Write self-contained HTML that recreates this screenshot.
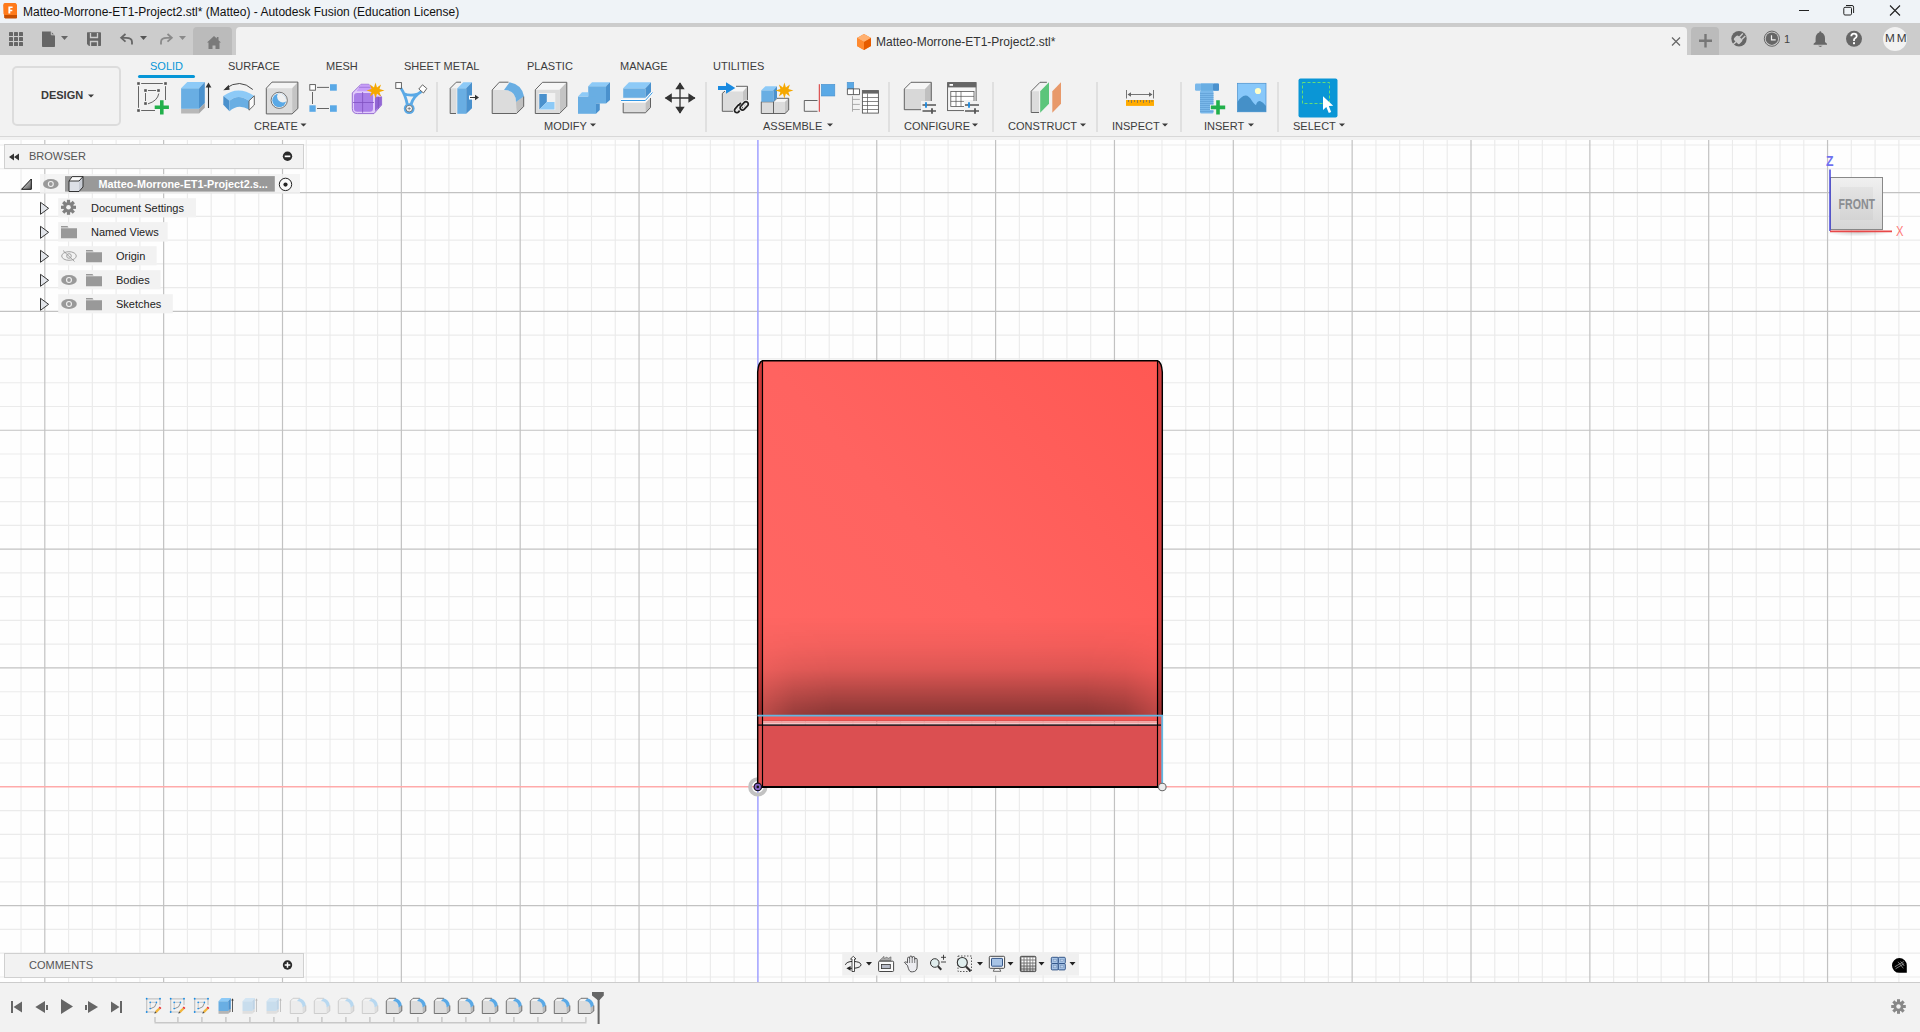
<!DOCTYPE html>
<html><head><meta charset="utf-8">
<style>
*{margin:0;padding:0;box-sizing:border-box}
html,body{width:1920px;height:1032px;overflow:hidden;background:#f2f2f2;font-family:"Liberation Sans",sans-serif;position:relative}
.a{position:absolute}
.t{position:absolute;white-space:nowrap;line-height:1}
svg{position:absolute;overflow:visible}
</style></head><body>
<!-- title bar -->
<div class="a" style="left:0;top:0;width:1920px;height:23px;background:#eff3f7"></div>
<div class="t" style="left:23px;top:6px;font-size:12px;color:#111">Matteo-Morrone-ET1-Project2.stl* (Matteo) - Autodesk Fusion (Education License)</div>
<svg width="1920" height="23" style="left:0;top:0">
<path d="M1799 10.5H1809" stroke="#222" stroke-width="1"/>
<rect x="1843.8" y="7.3" width="7.7" height="7.7" rx="1.2" fill="none" stroke="#222" stroke-width="1"/>
<path d="M1846 5.5H1852Q1853.6 5.5 1853.6 7.1V13" stroke="#222" stroke-width="1" fill="none"/>
<path d="M1890 5.5L1900 15.5M1900 5.5L1890 15.5" stroke="#222" stroke-width="1.1"/>
</svg>
<!-- tab strip -->
<div class="a" style="left:0;top:23px;width:1920px;height:32px;background:#cccccc"></div>
<div class="a" style="left:193px;top:27px;width:39px;height:28px;background:#bbbbbb;border-radius:4px 4px 0 0"></div>
<div class="a" style="left:236px;top:27px;width:1451px;height:28px;background:#f2f2f2;border-radius:4px 4px 0 0"></div>
<div class="t" style="left:876px;top:36px;font-size:12px;color:#333">Matteo-Morrone-ET1-Project2.stl*</div>
<div class="a" style="left:1691px;top:27px;width:28px;height:28px;background:#bbbbbb;border-radius:4px 4px 0 0"></div>
<div class="a" style="left:1883px;top:27px;width:24px;height:24px;background:#f2f2f2;border-radius:50%"></div>
<div class="t" style="left:1885px;top:33px;font-size:11.8px;color:#3a3a3a;letter-spacing:2px">MM</div>
<div class="t" style="left:1784px;top:34px;font-size:11px;color:#444">1</div>
<!-- tabstrip icons -->
<svg width="1920" height="60" style="left:0;top:0">
<!-- app icon -->
<path d="M4.5 4H15L17 6V17.5L16.5 18.5H5.2L4.2 17.5L3.5 5z" fill="#c84f00"/>
<path d="M3.5 4.2Q3.5 3 5 3H15.5L17 4.5V15H4.5L3.5 14z" fill="#ff7a1a"/>
<path d="M8.4 6.5H12.6V8.1H10.3V9.7H12.3V11.2H10.3V13.5H8.4z" fill="#fff"/>
<!-- grid -->
<g fill="#666"><rect x="9" y="32" width="4" height="4" rx="0.6"/><rect x="14" y="32" width="4" height="4" rx="0.6"/><rect x="19" y="32" width="4" height="4" rx="0.6"/>
<rect x="9" y="37" width="4" height="4" rx="0.6"/><rect x="14" y="37" width="4" height="4" rx="0.6"/><rect x="19" y="37" width="4" height="4" rx="0.6"/>
<rect x="9" y="42" width="4" height="4" rx="0.6"/><rect x="14" y="42" width="4" height="4" rx="0.6"/><rect x="19" y="42" width="4" height="4" rx="0.6"/></g>
<!-- file -->
<path d="M42 31.5H51L55 35.5V46.2Q55 47 54.2 47H42.8Q42 47 42 46.2z" fill="#666"/>
<path d="M51.3 31.3V34.8H55" stroke="#cccccc" stroke-width="1" fill="none"/>
<path d="M61 36h7l-3.5 4z" fill="#666"/>
<!-- save -->
<path d="M87.5 32.3H100.2Q101 32.3 101 33V45.3Q101 46 100.3 46H89L87 44V33Q87 32.3 87.5 32.3z" fill="#666"/>
<path d="M90.5 33V37.5H97.5V33M90.5 46V41.5H97.5V46" stroke="#cccccc" stroke-width="1.3" fill="none"/>
<!-- undo -->
<path d="M132 44.5V42Q132 37.8 126 37.8H122" stroke="#666" stroke-width="1.8" fill="none"/>
<path d="M125.5 34L121.2 37.8L125.5 41.6" stroke="#666" stroke-width="1.8" fill="none"/>
<path d="M140 36h7l-3.5 4z" fill="#555"/>
<!-- redo -->
<path d="M161 44.5V42Q161 37.8 167 37.8H171" stroke="#8a8a8a" stroke-width="1.8" fill="none"/>
<path d="M167.5 34L171.8 37.8L167.5 41.6" stroke="#8a8a8a" stroke-width="1.8" fill="none"/>
<path d="M179 36h7l-3.5 4z" fill="#8a8a8a"/>
<!-- home -->
<path d="M214 36L207 42.5H208.5V49H212.5V45.5H215.5V49H219.5V42.5H221L218.5 40.2V37H216.8V38.6z" fill="#7a7a7a"/>
<!-- tab cube -->
<path d="M864 34L871 38V46L864 50L857 46V38z" fill="#f47a20"/>
<path d="M864 34L871 38L864 42L857 38z" fill="#ffb070"/>
<path d="M864 42L871 38V46L864 50z" fill="#e65c00"/>
<path d="M857 38L864 42V50L857 46z" fill="#ff8a30"/>
<!-- close x -->
<path d="M1672 37.5L1680 45.5M1680 37.5L1672 45.5" stroke="#666" stroke-width="1.2"/>
<!-- plus -->
<path d="M1705.5 34V47.5M1699 40.7H1712" stroke="#777" stroke-width="2.4"/>
<!-- plug -->
<circle cx="1739" cy="38.7" r="7.7" fill="#666"/>
<g transform="translate(1739 38.7) rotate(45)" fill="#cccccc">
<rect x="-3.9" y="-1.6" width="8" height="6" rx="1.6"/>
<rect x="-1.6" y="-6.3" width="1.4" height="5"/><rect x="1.9" y="-6.3" width="1.4" height="5"/>
<rect x="-0.7" y="3.5" width="1.4" height="6.5"/>
</g>
<!-- clock -->
<circle cx="1771.9" cy="38.7" r="7.6" stroke="#666" stroke-width="1" fill="none"/>
<circle cx="1771.9" cy="38.7" r="6.2" fill="#666"/>
<path d="M1771.5 35.2V39.8H1775.7" stroke="#f0f0f0" stroke-width="1.2" fill="none"/>
<!-- bell -->
<path d="M1820.3 31.3Q1821.3 31.3 1821.3 32.5Q1825 33.8 1825 38.5V42L1827 43.8V44.8H1813.6V43.8L1815.6 42V38.5Q1815.6 33.8 1819.3 32.5Q1819.3 31.3 1820.3 31.3z" fill="#666"/>
<path d="M1818 45.7H1822.6L1820.3 47z" fill="#666"/>
<!-- help -->
<circle cx="1854" cy="38.8" r="8" fill="#666"/>
<path d="M1851.3 36.3Q1851.3 33.6 1854 33.6Q1856.7 33.6 1856.7 36Q1856.7 37.5 1854.8 38.5Q1854 39 1854 40.3V41" stroke="#fff" stroke-width="1.8" fill="none"/>
<rect x="1853" y="42.2" width="2" height="2" fill="#fff"/>
</svg>

<!-- toolbar -->
<div class="a" style="left:0;top:136px;width:1920px;height:1px;background:#d8d8d8"></div>
<div class="a" style="left:12px;top:66px;width:109px;height:60px;border:2px solid #dcdcdc;border-radius:5px"></div>
<div class="t" style="left:41px;top:90px;font-size:11px;font-weight:bold;color:#3a3a3a">DESIGN</div>
<div class="t" style="left:150px;top:61px;font-size:11px;color:#0696d7">SOLID</div>
<div class="a" style="left:138px;top:75px;width:57px;height:3px;background:#0696d7;border-radius:2px"></div>
<div class="t" style="left:228px;top:61px;font-size:11px;color:#3c3c3c">SURFACE</div>
<div class="t" style="left:326px;top:61px;font-size:11px;color:#3c3c3c">MESH</div>
<div class="t" style="left:404px;top:61px;font-size:11px;color:#3c3c3c">SHEET METAL</div>
<div class="t" style="left:527px;top:61px;font-size:11px;color:#3c3c3c">PLASTIC</div>
<div class="t" style="left:620px;top:61px;font-size:11px;color:#3c3c3c">MANAGE</div>
<div class="t" style="left:713px;top:61px;font-size:11px;color:#3c3c3c">UTILITIES</div>
<div class="t" style="left:254px;top:120.5px;font-size:11px;color:#3c3c3c">CREATE</div>
<div class="t" style="left:544px;top:120.5px;font-size:11px;color:#3c3c3c">MODIFY</div>
<div class="t" style="left:763px;top:120.5px;font-size:11px;color:#3c3c3c">ASSEMBLE</div>
<div class="t" style="left:904px;top:120.5px;font-size:11px;color:#3c3c3c">CONFIGURE</div>
<div class="t" style="left:1008px;top:120.5px;font-size:11px;color:#3c3c3c">CONSTRUCT</div>
<div class="t" style="left:1112px;top:120.5px;font-size:11px;color:#3c3c3c">INSPECT</div>
<div class="t" style="left:1204px;top:120.5px;font-size:11px;color:#3c3c3c">INSERT</div>
<div class="t" style="left:1293px;top:120.5px;font-size:11px;color:#3c3c3c">SELECT</div>
<!-- toolbar icons -->
<svg width="1920" height="140" style="left:0;top:0" stroke-linejoin="miter">
<!-- separators -->
<path d="M437 82V132M706 82V132M889 82V132M993 82V132M1097 82V132M1181 82V132M1278 82V132" stroke="#dadada" stroke-width="1.5"/>
<!-- dropdown arrows -->
<path d="M88 94.5h6l-3 3z M300.5 123.5h6l-3 3z M590 123.5h6l-3 3z M827 123.5h6l-3 3z M972 123.5h6l-3 3z M1080 123.5h6l-3 3z M1162 123.5h6l-3 3z M1248 123.5h6l-3 3z M1339 123.5h6l-3 3z" fill="#3c3c3c"/>
<!-- sketch -->
<g fill="#555">
<rect x="137.2" y="82.2" width="2.6" height="2.6"/><rect x="164.2" y="82.2" width="2.6" height="2.6"/><rect x="137.2" y="109.2" width="2.6" height="2.6"/>
<rect x="144.2" y="89.2" width="2.6" height="2.6"/><rect x="157.2" y="89.2" width="2.6" height="2.6"/><rect x="144.2" y="102.2" width="2.6" height="2.6"/>
</g>
<path d="M141.2 83.5H162.8M138.5 86.2V107.8M141.2 110.5H155M165.5 86.2V100M148 90.5H156M145.5 93V101M158.8 93.5Q157.5 101 148 103.8" stroke="#555" stroke-width="0.9" fill="none"/>
<path d="M160 100.2h3.6v5.3h5.3v3.6h-5.3v5.3H160v-5.3h-5.3v-3.6H160z" fill="#22b04b" stroke="#f2f2f2" stroke-width="1.6" paint-order="stroke"/>
<!-- extrude -->
<path d="M181.1 108.8H199V113.5H181.1z" fill="#b8b8b8"/><path d="M199 108.8L204.8 103V107.8L199 113.5z" fill="#a8a8a8"/>
<path d="M181.1 88.2H199V108.8H181.1z" fill="#69aee3"/><path d="M181.1 88.2L187.3 82H204.8L199 88.2z" fill="#8dcaf7"/><path d="M199 88.2L204.8 82V103L199 108.8z" fill="#4a91cd"/>
<path d="M208.5 108V86" stroke="#333" stroke-width="1.1"/><path d="M205.6 87.5L208.5 82.5L211.4 87.5z" fill="#333"/>
<!-- revolve -->
<path d="M252.8 89.5Q240 78 225.5 88.5" stroke="#333" stroke-width="0.9" fill="none"/><path d="M223.3 90.2L228.8 84.8L229.6 89.8z" fill="#333"/>
<path d="M223.3 96Q238 85 254 95.7L249 100.8Q238 93 229.5 100.8z" fill="#8dcaf7"/>
<path d="M223.3 96L229.5 100.8V111.3L223.3 104.8z" fill="#4a91cd"/>
<path d="M229.5 100.8Q238 93 249 100.8V109.5Q238 103 229.5 111.3z" fill="#69aee3"/>
<path d="M249 100.8L254.3 95.8V105L249 110.2z" fill="#fafafa" stroke="#555" stroke-width="0.9"/>
<!-- hole -->
<path d="M266.3 88.2L272 82.1H297.9L292.1 88.2z" fill="#f4f4f4"/><path d="M292.1 88.2L297.9 82.1V108.5L292.1 113.9z" fill="#c4c4c4"/><path d="M266.3 88.2H292.1V113.9H266.3z" fill="#dcdcdc"/>
<path d="M266.3 113.9V88.2L272 82.1H297.9V108.5L292.1 113.9z" fill="none" stroke="#555" stroke-width="0.9"/>
<circle cx="279.2" cy="100.3" r="8.1" fill="#f8f8f8" stroke="#555" stroke-width="0.8"/>
<clipPath id="hclip"><circle cx="279.2" cy="100.3" r="6.9"/></clipPath>
<circle cx="279.2" cy="100.3" r="6.9" fill="#5aa9e6"/>
<circle cx="282.9" cy="96.6" r="5.8" fill="#f0f0f0" clip-path="url(#hclip)"/>
<!-- pattern -->
<path d="M317 87.4H329M312.5 92V104M317 108.5H329" stroke="#555" stroke-width="0.9"/>
<rect x="309.8" y="84.6" width="5.6" height="5.6" fill="#fff" stroke="#555" stroke-width="0.9"/>
<rect x="330" y="84.2" width="6.8" height="6.5" fill="#5aa9e6"/><rect x="309.4" y="105.3" width="6.3" height="6.5" fill="#5aa9e6"/><rect x="330" y="105.3" width="6.8" height="6.5" fill="#5aa9e6"/>
<!-- form -->
<path d="M361 84.3H368.8L373 88.5L381.6 96.8V105L374 113.6H357.5Q352.3 113.6 352.3 108.5V93Z" fill="#e2cdfb" stroke="#8f62cf" stroke-width="0.9" stroke-linejoin="round"/>
<path d="M361.2 84.6H368.6L370.8 87.5L373.5 91.2H356.5L360 86z" fill="#c89ef8"/>
<path d="M359 87.3H370.5" stroke="#9a70d8" stroke-width="0.8"/>
<rect x="354" y="93" width="19" height="18.7" rx="3.2" fill="#a97ee8"/>
<path d="M375 96.5L381.4 97V105L375 111.2z" fill="#9266d4"/>
<path d="M362.6 92V112.8M353 102.5H374M378.3 96.8V108.5" stroke="#8050c0" stroke-width="0.8"/>
<path d="M375.5 82.5L377 87.5L381 84.5L379.5 89L384.5 90.5L379.5 92L381 96.5L377 93.5L375.5 98.5L374 93.5L370 96.5L371.5 92L366.5 90.5L371.5 89L370 84.5L374 87.5z" fill="#f5a800"/>
<!-- y shape -->
<path d="M400.5 87.5Q405.5 95 407.3 104.5M421.5 91.5Q413.5 96 411 104.5M403.5 93.5Q410 96.5 417.5 94" stroke="#5aa9e6" stroke-width="2.8" fill="none"/>
<circle cx="409.2" cy="108.6" r="5.4" fill="#5aa9e6"/><circle cx="409.2" cy="108.6" r="3.3" fill="#f4f4f4" stroke="#555" stroke-width="0.7"/>
<path d="M407.5 108.6h3.4M409.2 106.9v3.4" stroke="#555" stroke-width="0.6"/>
<rect x="395.8" y="82.6" width="5.6" height="5.8" fill="#fff" stroke="#555" stroke-width="0.9"/>
<path d="M418.8 89L422.5 84.8L426.8 88.5L423.5 93z" fill="#fff" stroke="#555" stroke-width="0.9"/>
<!-- press pull -->
<path d="M450.2 88.3H456.5V113.5H450.2z" fill="#dcdcdc"/>
<path d="M456 113.5H450.2V88.3L456.3 82.2H461" stroke="#555" stroke-width="0.9" fill="none"/>
<path d="M457.3 88.2H466.2V113.8H457.3z" fill="#69aee3"/><path d="M457.3 88.2L463.3 82.2H472L466.2 88.2z" fill="#8dcaf7"/><path d="M466.2 88.2L472 82.2V108.2L466.2 113.8z" fill="#4a91cd"/>
<rect x="469" y="95.5" width="4" height="4" fill="#fff"/>
<path d="M470 97.5H475.5" stroke="#333" stroke-width="1"/><path d="M475 94.7L479 97.5L475 100.3z" fill="#333"/>
<!-- fillet -->
<path d="M492.2 90H504Q516 90 516 102V113.5H492.2z" fill="#dcdcdc"/>
<path d="M516 102L523.7 96V106.5L516.5 113.5z" fill="#c0c0c0"/>
<path d="M504 90L509.6 82.2Q522 84.5 524 96.3L516 102Q516 90 504 90z" fill="#69aee3"/>
<path d="M492.2 90L499.3 82.2H508.5" stroke="#555" stroke-width="0.9" fill="none"/>
<path d="M492.2 90V113.5H516.5L523.7 106.5V96.5" stroke="#555" stroke-width="0.9" fill="none"/>
<!-- shell -->
<path d="M535.3 89.8L542.5 82.3H566.8L559.6 89.8z" fill="#f6f6f6"/><path d="M559.6 89.8L566.8 82.3V106.3L559.6 113.5z" fill="#c4c4c4"/><path d="M535.3 89.8H559.6V113.5H535.3z" fill="#dcdcdc"/>
<path d="M535.3 113.5V89.8L542.5 82.3H566.8V106.3L559.6 113.5z" fill="none" stroke="#555" stroke-width="0.9"/>
<rect x="538.6" y="93" width="16.7" height="17" fill="#f2f2f2"/>
<path d="M539.3 94H546.8V102L539.3 109.5z" fill="#4a91cd"/><path d="M546.8 102H554.5V109.5H539.3z" fill="#8dcaf7"/>
<!-- combine -->
<path d="M588.2 86.2H606V103.5H588.2z" fill="#69aee3"/><path d="M588.2 86.2L592 82.2H610L606 86.2z" fill="#8dcaf7"/><path d="M606 86.2L610 82.2V100L606 103.5z" fill="#4a91cd"/>
<path d="M578 96.5H596V113.8H578z" fill="#69aee3"/><path d="M578 96.5L582 92.2H588.2V96.5z" fill="#8dcaf7"/><path d="M596 103.5H599.8V110L596 113.8z" fill="#4a91cd"/>
<!-- split -->
<path d="M623.2 88.3H645.5V97.8H623.2z" fill="#69aee3"/><path d="M623.2 88.3L629 82.2H651L645.5 88.3z" fill="#8dcaf7"/><path d="M645.5 88.3L651 82.2V92L645.5 97.8z" fill="#4a91cd"/>
<path d="M621 100.5H645.3L652.5 92.5" stroke="#fff" stroke-width="2.4" fill="none"/><path d="M621 100.5H645.3L652.5 92.5" stroke="#1a8ae0" stroke-width="0.9" fill="none"/>
<path d="M623.2 103H645.5V112.8H623.2z" fill="#dcdcdc"/><path d="M645.5 103L650.5 98V107.5L645.5 112.8z" fill="#c0c0c0"/>
<path d="M623.2 103V112.8H645.5L650.5 107.5V98" stroke="#555" stroke-width="0.9" fill="none"/>
<!-- move -->
<path d="M665.5 98H695M680 83V113" stroke="#333" stroke-width="1.3"/>
<path d="M680 82.2L684.7 89.3H675.3z M680 113.8L684.7 106.7H675.3z M664.7 98L671.8 93.3V102.7z M695.5 98L688.4 93.3V102.7z" fill="#333"/>
<!-- joint link -->
<path d="M722.3 91.5L726 86.3H747.5L743 91.5z" fill="#f6f6f6"/><path d="M743 91.5L747.5 86.3V100L743 111.3z" fill="#c4c4c4"/><path d="M722.3 91.5H743V111.3H722.3z" fill="#dcdcdc"/>
<path d="M733.5 111.3H722.3V93.5L725 91M736 86.3H747.5V100.5" stroke="#555" stroke-width="0.9" fill="none"/>
<path d="M718 86.1H726.5V89.9H718z M726 82.3L735.3 88L726 93.7z" fill="#1a8ae0"/>
<g fill="none" stroke-width="1.75">
<rect x="-4.6" y="-2.3" width="9.2" height="4.6" rx="2.3" transform="translate(738.3 108.6) rotate(-50)" stroke="#f2f2f2" stroke-width="3.4"/>
<rect x="-4.6" y="-2.3" width="9.2" height="4.6" rx="2.3" transform="translate(738.3 108.6) rotate(-50)" stroke="#222"/>
<rect x="-4.9" y="-2.3" width="9.8" height="4.6" rx="2.3" transform="translate(744.2 105.9) rotate(-47)" stroke="#f2f2f2" stroke-width="3.4"/>
<rect x="-4.9" y="-2.3" width="9.8" height="4.6" rx="2.3" transform="translate(744.2 105.9) rotate(-47)" stroke="#222"/>
<path d="M738.4 105.8L740.9 102.9" stroke="#222"/>
</g>
<!-- new component -->
<path d="M761.3 101.8H785V113.5H761.3z" fill="#dcdcdc"/><path d="M773.5 101.8L777 98.3H788.7L785 101.8z" fill="#f6f6f6"/><path d="M785 101.8L788.7 98.3V110L785 113.5z" fill="#c4c4c4"/>
<path d="M761.3 101.8V113.5H785L788.7 110V98.3H777L773.5 101.8M773.5 101.8V113.5M761.3 101.8H773.5" stroke="#555" stroke-width="0.9" fill="none"/>
<path d="M761.3 90.3H773.5V101.8H761.3z" fill="#69aee3"/><path d="M761.3 90.3L765.5 86.2H777L773.5 90.3z" fill="#8dcaf7"/><path d="M773.5 90.3L777 86.2V98L773.5 101.8z" fill="#4a91cd"/>
<path d="M784.4 82.5L785.9 87.5L789.9 84.5L788.4 89L793.4 90.5L788.4 92L789.9 96.5L785.9 93.5L784.4 98.5L782.9 93.5L778.9 96.5L780.4 92L775.4 90.5L780.4 89L778.9 84.5L782.9 87.5z" fill="#f5a800"/>
<!-- joint -->
<path d="M817.5 100.5H804.3V111.3H817.5" stroke="#555" stroke-width="0.9" fill="none"/>
<path d="M819.3 84.2V111.8" stroke="#d83030" stroke-width="1"/>
<rect x="821.3" y="84.3" width="13.5" height="11.7" fill="#5aa9e6" stroke="#4a91cd" stroke-width="0.6"/>
<!-- table -->
<rect x="847.2" y="82.3" width="6.5" height="6.6" fill="#5aa9e6" stroke="#4a91cd" stroke-width="0.6"/>
<path d="M847.4 88.9H859.5V94.6H847.4zM853.4 88.9V94.6" stroke="#555" stroke-width="0.9" fill="#fff"/>
<path d="M852.5 96.2V111.7M852.5 99.4H859.8M852.5 104.4H859.8M852.5 109.5H859.8" stroke="#999" stroke-width="0.8" fill="none"/>
<rect x="862.4" y="90.6" width="16" height="22.5" fill="#fff" stroke="#555" stroke-width="0.9"/>
<rect x="862.4" y="90.6" width="16" height="3" fill="#666"/>
<path d="M862.4 97.5H878.4M862.4 101.5H878.4M862.4 105.5H878.4M862.4 109.5H878.4M867.5 93.6V113" stroke="#555" stroke-width="0.7"/>
<!-- configure cube -->
<path d="M904.3 89L911 82.3H931.3L925 89z" fill="#f6f6f6"/><path d="M925 89L931.3 82.3V102.8L925 109.7z" fill="#c0c0c0"/><path d="M904.3 89H925V109.7H904.3z" fill="#d8d8d8"/>
<path d="M921 109.7H904.3V89L911 82.3H931.3V102" stroke="#555" stroke-width="0.9" fill="none"/>
<rect x="921" y="101" width="16" height="14" fill="#f2f2f2"/>
<path d="M922.5 105H936M922.5 111H936" stroke="#555" stroke-width="1.3"/>
<path d="M926 102.2V107.8" stroke="#1a8ae0" stroke-width="1.8"/><path d="M932 108.2V113.8" stroke="#555" stroke-width="1.8"/>
<!-- configure table -->
<rect x="947.6" y="82.6" width="28.5" height="28" fill="#f6f6f6" stroke="#555" stroke-width="0.9"/>
<rect x="947.6" y="82.6" width="28.5" height="4.8" fill="#666"/><rect x="949.5" y="84" width="3.5" height="1.8" fill="#fff"/>
<rect x="950.8" y="91.4" width="23.2" height="15" fill="#fff" stroke="#555" stroke-width="0.8"/>
<path d="M950.8 96.4H974M950.8 101.4H974M956 91.4V106.4M961 91.4V106.4" stroke="#555" stroke-width="0.7"/>
<rect x="964" y="101" width="16" height="14" fill="#f2f2f2"/>
<path d="M965 105H979M965 111H979" stroke="#555" stroke-width="1.3"/>
<path d="M969 102.2V107.8" stroke="#1a8ae0" stroke-width="1.8"/><path d="M975 108.2V113.8" stroke="#555" stroke-width="1.8"/>
<!-- construct -->
<path d="M1032 91.2H1039V112.5H1032z" fill="#dcdcdc"/>
<path d="M1039 112.5H1031.2V91.2L1040 82.3H1046.9" stroke="#555" stroke-width="0.9" fill="none"/>
<path d="M1040.2 91.2L1049 82.3V103.8L1040.2 112.7z" fill="#5bc57a"/>
<path d="M1052.3 91.2L1061 82.3V103.7L1052.3 112.7z" fill="#e8996a"/>
<!-- inspect -->
<path d="M1126.5 90V98.5M1153.5 90V98.5M1128 94.5H1152" stroke="#666" stroke-width="0.9"/>
<path d="M1127.5 94.5L1131 92.3V96.7z M1152.5 94.5L1149 92.3V96.7z" fill="#666"/>
<rect x="1126" y="100" width="28" height="5.9" fill="#ffab00"/>
<path d="M1128.5 100V102M1131.5 100V103M1134.5 100V102M1137.5 100V103M1140.5 100V102M1143.5 100V103M1146.5 100V102M1149.5 100V103M1152 100V102" stroke="#666" stroke-width="0.7"/>
<!-- bolt -->
<rect x="1200" y="90.5" width="13.5" height="23" rx="1.5" fill="#7ab8ea"/>
<path d="M1200 93.5H1213.5M1200 95.5H1213.5M1200 97.5H1213.5M1200 99.5H1213.5M1200 101.5H1213.5M1200 103.5H1213.5M1200 105.5H1213.5M1200 107.5H1213.5M1200 109.5H1213.5M1200 111.5H1213.5" stroke="#5a9ad0" stroke-width="0.6"/>
<rect x="1195" y="83.5" width="24" height="7.3" rx="1.2" fill="#7ab8ea"/><rect x="1201" y="83.5" width="12" height="7.3" fill="#69aee3"/><rect x="1213" y="83.5" width="6" height="7.3" rx="1" fill="#4a91cd"/>
<path d="M1216.2 100.2h3.6v5.4h5.4v3.6h-5.4v5.4h-3.6v-5.4h-5.4v-3.6h5.4z" fill="#22b04b" stroke="#f2f2f2" stroke-width="1.6" paint-order="stroke"/>
<!-- image -->
<rect x="1237.5" y="83.3" width="28.5" height="28.5" fill="#88c8fa" stroke="#4a91cd" stroke-width="0.7"/>
<path d="M1237.5 102Q1241 96 1245.5 95.5Q1249 95.5 1252 101Q1255 105 1256 105Q1257 101 1260 101Q1263 102 1266 106V111.8H1237.5z" fill="#4590c8"/>
<circle cx="1258" cy="91" r="3.1" fill="#ffffc8"/>
<!-- select -->
<rect x="1298.5" y="78.5" width="39" height="39" rx="2" fill="#0a96d6"/>
<rect x="1302.5" y="82.5" width="27" height="21" fill="none" stroke="#66dd77" stroke-width="1" stroke-dasharray="3 2"/>
<path d="M1323 96.3V110L1326.3 107L1328.8 113L1331.2 112L1328.8 106L1333.2 105.8z" fill="#fff"/>
</svg>

<!-- viewport -->
<div class="a" style="left:0;top:140px;width:1920px;height:842px;background:#fefefe"></div>
<div class="a" style="left:0;top:982px;width:1920px;height:1px;background:#cccccc"></div>
<svg width="1920" height="1032" style="left:0;top:0">
<path d="M21.03 140V982M68.57 140V982M92.34 140V982M116.11 140V982M139.88 140V982M187.42 140V982M211.19 140V982M234.96 140V982M258.73 140V982M306.27 140V982M330.04 140V982M353.81 140V982M377.58 140V982M425.12 140V982M448.89 140V982M472.66 140V982M496.43 140V982M543.97 140V982M567.74 140V982M591.51 140V982M615.28 140V982M662.82 140V982M686.59 140V982M710.36 140V982M734.13 140V982M781.67 140V982M805.44 140V982M829.21 140V982M852.98 140V982M900.52 140V982M924.29 140V982M948.06 140V982M971.83 140V982M1019.37 140V982M1043.14 140V982M1066.91 140V982M1090.68 140V982M1138.22 140V982M1161.99 140V982M1185.76 140V982M1209.53 140V982M1257.07 140V982M1280.84 140V982M1304.61 140V982M1328.38 140V982M1375.92 140V982M1399.69 140V982M1423.46 140V982M1447.23 140V982M1494.77 140V982M1518.54 140V982M1542.31 140V982M1566.08 140V982M1613.62 140V982M1637.39 140V982M1661.16 140V982M1684.93 140V982M1732.47 140V982M1756.24 140V982M1780.01 140V982M1803.78 140V982M1851.32 140V982M1875.09 140V982M1898.86 140V982M0 145.01H1920M0 168.78H1920M0 216.32H1920M0 240.09H1920M0 263.86H1920M0 287.63H1920M0 335.17H1920M0 358.94H1920M0 382.71H1920M0 406.48H1920M0 454.02H1920M0 477.79H1920M0 501.56H1920M0 525.33H1920M0 572.87H1920M0 596.64H1920M0 620.41H1920M0 644.18H1920M0 691.72H1920M0 715.49H1920M0 739.26H1920M0 763.03H1920M0 810.57H1920M0 834.34H1920M0 858.11H1920M0 881.88H1920M0 929.42H1920M0 953.19H1920M0 976.96H1920" stroke="#ebebeb" stroke-width="1.15" fill="none"/>
<path d="M44.8 140V982M163.65 140V982M282.5 140V982M401.35 140V982M520.2 140V982M639.05 140V982M876.75 140V982M995.6 140V982M1114.45 140V982M1233.3 140V982M1352.15 140V982M1471.0 140V982M1589.85 140V982M1708.7 140V982M1827.55 140V982M0 192.55H1920M0 311.4H1920M0 430.25H1920M0 549.1H1920M0 667.95H1920M0 905.65H1920" stroke="#c2c2c2" stroke-width="1.2" fill="none"/>
<path d="M757.9 140V982" stroke="#a6a6ff" stroke-width="1.6"/>
<path d="M0 786.8H1920" stroke="#ffaaaa" stroke-width="1.6"/>
</svg>
<svg width="1920" height="1032" style="left:0;top:0">
<defs>
<linearGradient id="fg" x1="1157" y1="361" x2="762" y2="715" gradientUnits="userSpaceOnUse">
<stop offset="0" stop-color="#ff5853"/><stop offset="0.55" stop-color="#ff6360"/><stop offset="1" stop-color="#ff6763"/>
</linearGradient>
<linearGradient id="sh" x1="0" y1="600" x2="0" y2="715" gradientUnits="userSpaceOnUse">
<stop offset="0.15" stop-color="#000" stop-opacity="0"/>
<stop offset="0.4" stop-color="#000" stop-opacity="0.05"/>
<stop offset="0.6" stop-color="#000" stop-opacity="0.13"/>
<stop offset="0.8" stop-color="#000" stop-opacity="0.3"/>
<stop offset="0.92" stop-color="#000" stop-opacity="0.4"/>
<stop offset="1" stop-color="#000" stop-opacity="0.46"/>
</linearGradient>
<linearGradient id="shm" x1="762" y1="0" x2="1157" y2="0" gradientUnits="userSpaceOnUse">
<stop offset="0" stop-color="#fff" stop-opacity="0.58"/>
<stop offset="0.08" stop-color="#fff" stop-opacity="0.88"/>
<stop offset="0.18" stop-color="#fff" stop-opacity="1"/>
<stop offset="0.82" stop-color="#fff" stop-opacity="1"/>
<stop offset="0.92" stop-color="#fff" stop-opacity="0.88"/>
<stop offset="1" stop-color="#fff" stop-opacity="0.58"/>
</linearGradient>
<mask id="mk" maskUnits="userSpaceOnUse" x="0" y="0" width="1920" height="1032"><rect x="757" y="560" width="406" height="160" fill="url(#shm)"/></mask>
<linearGradient id="sideL" x1="758" y1="0" x2="762" y2="0" gradientUnits="userSpaceOnUse">
<stop offset="0" stop-color="#e84545"/><stop offset="1" stop-color="#b83232"/>
</linearGradient>
<linearGradient id="sideR" x1="1157" y1="0" x2="1162" y2="0" gradientUnits="userSpaceOnUse">
<stop offset="0" stop-color="#b83232"/><stop offset="1" stop-color="#e04545"/>
</linearGradient>
</defs>
<circle cx="757.8" cy="786.9" r="7.75" stroke="#c2c2c2" stroke-width="3.8" fill="none"/>
<!-- side strips -->
<path d="M757.7 786.5V372 Q758.5 362 762.5 360.5V786.5Z" fill="url(#sideL)"/>
<path d="M1162.3 715V372 Q1161.5 362 1157.5 360.5V715Z" fill="url(#sideR)"/>
<rect x="758" y="716" width="4.5" height="70" fill="#dc5050"/>
<rect x="1157.5" y="716" width="4.5" height="70" fill="#e25252"/>
<!-- front face -->
<rect x="762.5" y="360.5" width="395" height="355" fill="url(#fg)"/>
<rect x="757" y="560" width="406" height="156" fill="url(#sh)" mask="url(#mk)"/>
<!-- band -->
<rect x="762.5" y="715.5" width="395" height="5.5" fill="#f25653"/>
<rect x="762.5" y="720" width="395" height="1.5" fill="#e25050"/>
<rect x="762.5" y="722" width="395" height="1.6" fill="#f2a0a0"/>
<rect x="762.5" y="725" width="395" height="61.5" fill="#db4f51"/>
<path d="M757.5 725.1H1161" stroke="#3a2025" stroke-width="1.6"/>
<!-- edges -->
<path d="M757.7 787V372 Q758.5 362 762.5 360.8H1157.5 Q1161.5 362 1162.3 372V715" stroke="#000" stroke-width="1.45" fill="none"/>
<path d="M762.5 361V787M1157.5 361V787" stroke="#000" stroke-width="1.15" fill="none"/>
<path d="M757 786.9H1162" stroke="#000" stroke-width="2"/>
<path d="M757.5 715.6H1162.2V787" stroke="#62b8e2" stroke-width="1.8" fill="none"/>
<!-- origin -->

<circle cx="757.8" cy="786.9" r="3.7" stroke="#151020" stroke-width="1.2" fill="#8a68c8"/>
<circle cx="757.8" cy="786.9" r="1.3" fill="#111"/>
<circle cx="1162.3" cy="787" r="3.8" stroke="#6a6a6a" stroke-width="1.1" fill="#ececec"/>
</svg>

<!-- browser -->
<div class="a" style="left:4px;top:144px;width:300px;height:25px;background:#f2f2f2;border:1px solid #d0d0d0"></div>
<div class="t" style="left:29px;top:151px;font-size:11px;color:#555">BROWSER</div>
<!-- comments -->
<div class="a" style="left:4px;top:953px;width:300px;height:25px;background:#f2f2f2;border:1px solid #d0d0d0"></div>
<div class="t" style="left:29px;top:960px;font-size:11px;color:#555">COMMENTS</div>
<!-- navcube -->
<svg width="1920" height="1032" style="left:0;top:0">
<!-- nav bar -->
<rect x="842.2" y="952.2" width="236.8" height="23.4" fill="#f0f0f0"/>
<g fill="#222">
<path d="M866 962H872L869 965.5z M977 962H983L980 965.5z M1007.5 962H1013.5L1010.5 965.5z M1038.5 962H1044.5L1041.5 965.5z M1069.5 962H1075.5L1072.5 965.5z"/>
</g>
<!-- orbit -->
<path d="M845.4 964.8Q846.5 961.5 853 961.4Q860.6 961.7 861 964.6Q861 967.6 854 968.3H850" stroke="#222" stroke-width="0.95" fill="none"/>
<path d="M846.4 968.3L850.6 965.9V970.7z" fill="#222"/>
<path d="M853.3 956.3L856 959H854.5V971.5H852V959H850.5z" fill="#fff" stroke="#222" stroke-width="0.8" stroke-linejoin="round"/>
<!-- look at -->
<path d="M879.5 960.5L884 956.3V958.5L887 957L888 958.5L891 956.8V960.5z" fill="#aaa" stroke="#555" stroke-width="0.5"/>
<rect x="878.6" y="961.2" width="15" height="10.3" rx="1" fill="#fafafa" stroke="#333" stroke-width="0.9"/>
<rect x="881.5" y="964.4" width="8.8" height="4.2" fill="#b8bcc8" stroke="#333" stroke-width="0.8"/>
<!-- hand -->
<path d="M907.5 965.5L905 963.2Q904 962.5 904.8 962Q906 961.5 907.5 962.8V958.5Q907.5 957.2 908.6 957.2Q909.6 957.2 909.6 958.5V957.5Q909.6 956 910.9 956Q912.2 956 912.2 957.5V957.8Q912.2 956.5 913.4 956.5Q914.7 956.5 914.7 957.8V959.5Q914.7 958.3 915.9 958.3Q917.2 958.3 917.2 959.8V966Q917.2 971.8 912.5 971.8H911Q909 971.8 907.5 965.5z" fill="#ececf0" stroke="#333" stroke-width="0.8"/>
<path d="M909.6 958.5V963M912.2 957.8V963M914.7 959.5V963" stroke="#333" stroke-width="0.6"/>
<!-- zoom -->
<circle cx="934.8" cy="963" r="4.3" fill="#dfecec" stroke="#333" stroke-width="1"/>
<path d="M938 966.3L941.3 969.8" stroke="#333" stroke-width="2"/>
<path d="M941 957.3H946M943.5 954.8V959.8M941 962H946" stroke="#333" stroke-width="0.9"/>
<!-- zoom window -->
<rect x="958" y="956" width="13.5" height="15.5" fill="none" stroke="#333" stroke-width="0.8" stroke-dasharray="1.5 1.5"/>
<circle cx="962.3" cy="962.5" r="5" fill="#dfeeee" stroke="#333" stroke-width="1.1"/>
<path d="M966 966.5L970.5 971" stroke="#333" stroke-width="2.2"/>
<!-- display -->
<rect x="989.3" y="956.3" width="15.3" height="12" rx="1" fill="#f8f8f8" stroke="#333" stroke-width="0.9"/>
<rect x="991.5" y="958.4" width="11" height="7.8" rx="0.6" fill="#a8c4e6" stroke="#24477e" stroke-width="0.9"/>
<path d="M994.5 968.5L993.3 971.3H1000.8L999.5 968.5z" fill="#f8f8f8" stroke="#333" stroke-width="0.7"/>
<!-- grid -->
<defs><linearGradient id="gdg" x1="0" y1="0" x2="0" y2="1"><stop offset="0" stop-color="#888"/><stop offset="1" stop-color="#555"/></linearGradient></defs>
<rect x="1020.3" y="956.3" width="15.6" height="15.3" rx="1.2" fill="url(#gdg)" stroke="#333" stroke-width="0.8"/>
<g fill="#fff">
<rect x="1021.5" y="957.5" width="2" height="2"/><rect x="1024.5" y="957.5" width="2" height="2"/><rect x="1027.5" y="957.5" width="2" height="2"/><rect x="1030.5" y="957.5" width="2" height="2"/><rect x="1033.2" y="957.5" width="2" height="2"/>
<rect x="1021.5" y="960.5" width="2" height="2"/><rect x="1024.5" y="960.5" width="2" height="2"/><rect x="1027.5" y="960.5" width="2" height="2"/><rect x="1030.5" y="960.5" width="2" height="2"/><rect x="1033.2" y="960.5" width="2" height="2"/>
<rect x="1021.5" y="963.5" width="2" height="2" opacity="0.9"/><rect x="1024.5" y="963.5" width="2" height="2" opacity="0.9"/><rect x="1027.5" y="963.5" width="2" height="2" opacity="0.9"/><rect x="1030.5" y="963.5" width="2" height="2" opacity="0.9"/><rect x="1033.2" y="963.5" width="2" height="2" opacity="0.9"/>
<rect x="1021.5" y="966.5" width="2" height="2" opacity="0.75"/><rect x="1024.5" y="966.5" width="2" height="2" opacity="0.75"/><rect x="1027.5" y="966.5" width="2" height="2" opacity="0.75"/><rect x="1030.5" y="966.5" width="2" height="2" opacity="0.75"/><rect x="1033.2" y="966.5" width="2" height="2" opacity="0.75"/>
<rect x="1021.5" y="969.3" width="2" height="1.8" opacity="0.6"/><rect x="1024.5" y="969.3" width="2" height="1.8" opacity="0.6"/><rect x="1027.5" y="969.3" width="2" height="1.8" opacity="0.6"/><rect x="1030.5" y="969.3" width="2" height="1.8" opacity="0.6"/><rect x="1033.2" y="969.3" width="2" height="1.8" opacity="0.6"/>
</g>
<!-- viewports -->
<g fill="#a8c4e6" stroke="#24477e" stroke-width="0.9">
<rect x="1051.3" y="957.3" width="7" height="6.3" rx="1"/><rect x="1058.3" y="957.3" width="7" height="6.3" rx="1"/>
<rect x="1051.3" y="963.6" width="7" height="6.3" rx="1"/><rect x="1058.3" y="963.6" width="7" height="6.3" rx="1"/>
</g>
<g fill="#bcd0ea" stroke="#6f8fb8" stroke-width="0.5"><rect x="1053.2" y="959.3" width="3.2" height="2.2"/><rect x="1060.2" y="959.3" width="3.2" height="2.2"/><rect x="1053.2" y="965.6" width="3.2" height="2.2"/><rect x="1060.2" y="965.6" width="3.2" height="2.2"/></g>
<!-- viewcube -->
<defs>
<linearGradient id="vcg" x1="0" y1="0" x2="0" y2="1"><stop offset="0" stop-color="#f0f0f0"/><stop offset="1" stop-color="#d6d6d6"/></linearGradient>
<radialGradient id="vcs" cx="0.5" cy="0.5" r="0.5"><stop offset="0" stop-color="#000" stop-opacity="0.18"/><stop offset="1" stop-color="#000" stop-opacity="0"/></radialGradient>
</defs>
<ellipse cx="1858" cy="232.5" rx="32" ry="4" fill="url(#vcs)"/>
<rect x="1830.5" y="177.5" width="52" height="52" fill="url(#vcg)" stroke="#888" stroke-width="1"/>
<rect x="1840" y="187" width="33" height="33" fill="#000" opacity="0.03"/>
<path d="M1830 169.5V231" stroke="#4444dd" stroke-width="1.5"/>
<path d="M1830 231.3H1892" stroke="#e84848" stroke-width="1.7"/>
<text x="1838.6" y="209.2" font-family="Liberation Sans" font-size="15" font-weight="bold" fill="#8a8d91" textLength="36.5" lengthAdjust="spacingAndGlyphs">FRONT</text>
<text x="1826" y="166.2" font-family="Liberation Sans" font-size="15" font-weight="bold" fill="#7070f0" textLength="7.5" lengthAdjust="spacingAndGlyphs">Z</text>
<text x="1896" y="236.3" font-family="Liberation Sans" font-size="15" fill="#ff7a7a" textLength="7.5" lengthAdjust="spacingAndGlyphs">X</text>
<!-- bottom right -->
<path d="M1899.4 958A7.4 7.4 0 0 0 1892 965.4A7.4 7.4 0 0 0 1899.4 972.8H1906.8V965.4A7.4 7.4 0 0 0 1899.4 958z" fill="#000"/>
<path d="M1894.8 966.8L1903.8 961.5M1895.5 968.8L1904.2 963.6M1898 961.8L1903.3 968.3M1900.5 961.3L1904.3 966" stroke="#ccc" stroke-width="0.6"/>
<g transform="translate(1898.5 1006.5)" fill="#888">
<circle r="5"/>
<rect x="-1.5" y="-7.3" width="3" height="14.6"/><rect x="-1.5" y="-7.3" width="3" height="14.6" transform="rotate(45)"/><rect x="-1.5" y="-7.3" width="3" height="14.6" transform="rotate(90)"/><rect x="-1.5" y="-7.3" width="3" height="14.6" transform="rotate(135)"/>
<circle r="2.2" fill="#f2f2f2"/>
</g>
</svg>

<!-- panels -->
<svg width="1920" height="1032" style="left:0;top:0">
<!-- browser header icons -->
<path d="M9 157L14 153.5V160.5z M14 157L19 153.5V160.5z" fill="#333"/>
<circle cx="287.5" cy="156.3" r="4.7" fill="#2a2a2a"/><rect x="284.7" y="155.5" width="5.6" height="1.7" fill="#fff"/>
<!-- root row -->
<rect x="40" y="174" width="260" height="19.5" fill="#f2f2f2" opacity="0.85"/>
<defs><linearGradient id="trg" x1="0" y1="0" x2="1" y2="1"><stop offset="0" stop-color="#fff"/><stop offset="1" stop-color="#555"/></linearGradient></defs>
<path d="M21.5 189.3L31.3 179V189.3z" fill="url(#trg)" stroke="#111" stroke-width="1"/>
<ellipse cx="50.8" cy="184" rx="7.8" ry="4.9" fill="#999"/><circle cx="50.8" cy="184" r="3" fill="#f2f2f2"/><circle cx="50.8" cy="184" r="1.9" fill="#999"/>
<rect x="65" y="176.1" width="209.8" height="15.5" fill="#999999"/>
<path d="M69 181H79V191.5H69z" fill="#dde0e6"/><path d="M69 181L72.2 176.6H83L79 181z" fill="#fafafa"/><path d="M79 181L83 176.6V187L79 191.5z" fill="#c8ccd4"/>
<path d="M69 191.5V181L72.2 176.6H83V187L79 191.5z M79 181H69 M79 181L83 176.6" stroke="#222" stroke-width="0.9" fill="none" stroke-linejoin="round"/>
<circle cx="285.5" cy="184.4" r="6.2" fill="#f8f8f8" stroke="#222" stroke-width="1"/><circle cx="285.5" cy="184.6" r="2.1" fill="#222"/>
<!-- rows -->
<rect x="58.2" y="198.2" width="137.8" height="19.2" fill="#f2f2f2"/>
<rect x="58.2" y="222.1" width="109.5" height="19.5" fill="#f2f2f2"/>
<rect x="58.2" y="246.2" width="98.5" height="19.1" fill="#f2f2f2"/>
<rect x="58.2" y="270.2" width="102.4" height="19.1" fill="#f2f2f2"/>
<rect x="58.2" y="294.2" width="114.6" height="19.1" fill="#f2f2f2"/>
<g fill="#e2e5ea" stroke="#222" stroke-width="0.9" stroke-linejoin="round">
<path d="M40.5 202.3L48.6 208.3L40.5 214.3z"/><path d="M40.5 226.3L48.6 232.3L40.5 238.3z"/><path d="M40.5 250.3L48.6 256.3L40.5 262.3z"/><path d="M40.5 274.3L48.6 280.3L40.5 286.3z"/><path d="M40.5 298.3L48.6 304.3L40.5 310.3z"/>
</g>
<!-- gear -->
<g transform="translate(68.5 207.3)" fill="#808080">
<circle r="5.2"/>
<g><rect x="-1.6" y="-7.5" width="3.2" height="15"/><rect x="-1.6" y="-7.5" width="3.2" height="15" transform="rotate(45)"/><rect x="-1.6" y="-7.5" width="3.2" height="15" transform="rotate(90)"/><rect x="-1.6" y="-7.5" width="3.2" height="15" transform="rotate(135)"/></g>
<circle r="2.3" fill="#f2f2f2"/>
</g>
<!-- folders -->
<g fill="#999">
<path d="M61 226H67.5L68.5 227.5H61z M61 228.3H77V238.3H61z"/>
<path d="M86 250H92.5L93.5 251.5H86z M86 252.3H102V262.3H86z"/>
<path d="M86 274H92.5L93.5 275.5H86z M86 276.3H102V286.3H86z"/>
<path d="M86 298H92.5L93.5 299.5H86z M86 300.3H102V310.3H86z"/>
</g>
<!-- eyes -->
<ellipse cx="69" cy="256" rx="7.3" ry="4.3" fill="none" stroke="#999" stroke-width="0.9"/><circle cx="69" cy="256" r="2.3" fill="none" stroke="#999" stroke-width="0.9"/><path d="M63 250.5L74.5 261.5" stroke="#999" stroke-width="0.9"/>
<ellipse cx="69" cy="280" rx="7.8" ry="4.9" fill="#999"/><circle cx="69" cy="280" r="3" fill="#f2f2f2"/><circle cx="69" cy="280" r="1.9" fill="#999"/>
<ellipse cx="69" cy="304" rx="7.8" ry="4.9" fill="#999"/><circle cx="69" cy="304" r="3" fill="#f2f2f2"/><circle cx="69" cy="304" r="1.9" fill="#999"/>
<!-- comments plus -->
<circle cx="287.5" cy="965" r="4.7" fill="#2a2a2a"/><path d="M284.7 965H290.3M287.5 962.2V967.8" stroke="#fff" stroke-width="1.5"/>
</svg>
<div class="t" style="left:98.5px;top:178.6px;font-size:10.8px;font-weight:bold;color:#fff">Matteo-Morrone-ET1-Project2.s...</div>
<div class="t" style="left:91px;top:203px;font-size:11px;color:#222">Document Settings</div>
<div class="t" style="left:91px;top:227px;font-size:11px;color:#222">Named Views</div>
<div class="t" style="left:116px;top:251px;font-size:11px;color:#222">Origin</div>
<div class="t" style="left:116px;top:275px;font-size:11px;color:#222">Bodies</div>
<div class="t" style="left:116px;top:299px;font-size:11px;color:#222">Sketches</div>

<!-- timeline -->
<svg width="1920" height="1032" style="left:0;top:0"><g fill="#666"><rect x="11" y="1001" width="2" height="12"/><path d="M13.5 1007L22 1001.5V1012.5z"/><path d="M35.3 1007L45 1001V1013z"/><rect x="46" y="1005" width="2" height="5"/><path d="M61 999L73 1006.5L61 1014z"/><rect x="85" y="1005" width="2" height="5"/><path d="M88 1001L98 1007L88 1013z"/><path d="M111 1001.5L119.5 1007L111 1012.5z"/><rect x="120" y="1001" width="2" height="12"/></g><g transform="translate(0.0 0)"><path d="M147.4 998.8H159.4M146.7 999.5V1011.4M147.4 1012H154M160 999.5V1005" stroke="#c4c4c4" stroke-width="1.2" fill="none"/><path d="M151 1002.3H155.6M150.2 1003.1V1007.7" stroke="#bbb" stroke-width="0.8" fill="none"/><path d="M156.4 1003.1Q155.6 1007.8 151 1008.5" stroke="#555" stroke-width="0.6" fill="none"/><g fill="#1a8ae0"><circle cx="146.7" cy="998.8" r="0.95"/><circle cx="160" cy="998.8" r="0.95"/><circle cx="146.7" cy="1012" r="0.95"/><circle cx="150.2" cy="1002.3" r="0.85"/><circle cx="156.4" cy="1002.3" r="0.85"/><circle cx="150.2" cy="1008.5" r="0.85"/></g><path d="M155 1011.3L158.6 1007.7L160.2 1009.3L156.6 1012.9z" fill="#f2b53a"/><path d="M158.6 1007.7L159.8 1006.5L161.4 1008.1L160.2 1009.3z" fill="#ee3030"/><path d="M155 1011.3L156.6 1012.9L154.2 1013.6z" fill="#444"/></g><g transform="translate(24.0 0)"><path d="M147.4 998.8H159.4M146.7 999.5V1011.4M147.4 1012H154M160 999.5V1005" stroke="#c4c4c4" stroke-width="1.2" fill="none"/><path d="M151 1002.3H155.6M150.2 1003.1V1007.7" stroke="#bbb" stroke-width="0.8" fill="none"/><path d="M156.4 1003.1Q155.6 1007.8 151 1008.5" stroke="#555" stroke-width="0.6" fill="none"/><g fill="#1a8ae0"><circle cx="146.7" cy="998.8" r="0.95"/><circle cx="160" cy="998.8" r="0.95"/><circle cx="146.7" cy="1012" r="0.95"/><circle cx="150.2" cy="1002.3" r="0.85"/><circle cx="156.4" cy="1002.3" r="0.85"/><circle cx="150.2" cy="1008.5" r="0.85"/></g><path d="M155 1011.3L158.6 1007.7L160.2 1009.3L156.6 1012.9z" fill="#f2b53a"/><path d="M158.6 1007.7L159.8 1006.5L161.4 1008.1L160.2 1009.3z" fill="#ee3030"/><path d="M155 1011.3L156.6 1012.9L154.2 1013.6z" fill="#444"/></g><g transform="translate(48.0 0)"><path d="M147.4 998.8H159.4M146.7 999.5V1011.4M147.4 1012H154M160 999.5V1005" stroke="#c4c4c4" stroke-width="1.2" fill="none"/><path d="M151 1002.3H155.6M150.2 1003.1V1007.7" stroke="#bbb" stroke-width="0.8" fill="none"/><path d="M156.4 1003.1Q155.6 1007.8 151 1008.5" stroke="#555" stroke-width="0.6" fill="none"/><g fill="#1a8ae0"><circle cx="146.7" cy="998.8" r="0.95"/><circle cx="160" cy="998.8" r="0.95"/><circle cx="146.7" cy="1012" r="0.95"/><circle cx="150.2" cy="1002.3" r="0.85"/><circle cx="156.4" cy="1002.3" r="0.85"/><circle cx="150.2" cy="1008.5" r="0.85"/></g><path d="M155 1011.3L158.6 1007.7L160.2 1009.3L156.6 1012.9z" fill="#f2b53a"/><path d="M158.6 1007.7L159.8 1006.5L161.4 1008.1L160.2 1009.3z" fill="#ee3030"/><path d="M155 1011.3L156.6 1012.9L154.2 1013.6z" fill="#444"/></g><g transform="translate(218.5 998)" opacity="1.0"><path d="M0 13H9.8V15.8H0z" fill="#b5b5b5"/><path d="M9.8 13L12.3 10.5V13.3L9.8 15.8z" fill="#a5a5a5"/><path d="M0 3.2H9.8V13H0z" fill="#69aee3"/><path d="M0 3.2L3 0H12.3L9.8 3.2z" fill="#8dcaf7"/><path d="M9.8 3.2L12.3 0V10.5L9.8 13z" fill="#4a91cd"/><path d="M14 14V1.5" stroke="#333" stroke-width="0.8"/><path d="M12.8 2.5L14 0.3L15.2 2.5z" fill="#333"/></g><g transform="translate(242.5 998)" opacity="0.3"><path d="M0 13H9.8V15.8H0z" fill="#b5b5b5"/><path d="M9.8 13L12.3 10.5V13.3L9.8 15.8z" fill="#a5a5a5"/><path d="M0 3.2H9.8V13H0z" fill="#69aee3"/><path d="M0 3.2L3 0H12.3L9.8 3.2z" fill="#8dcaf7"/><path d="M9.8 3.2L12.3 0V10.5L9.8 13z" fill="#4a91cd"/><path d="M14 14V1.5" stroke="#333" stroke-width="0.8"/><path d="M12.8 2.5L14 0.3L15.2 2.5z" fill="#333"/></g><g transform="translate(266.5 998)" opacity="0.3"><path d="M0 13H9.8V15.8H0z" fill="#b5b5b5"/><path d="M9.8 13L12.3 10.5V13.3L9.8 15.8z" fill="#a5a5a5"/><path d="M0 3.2H9.8V13H0z" fill="#69aee3"/><path d="M0 3.2L3 0H12.3L9.8 3.2z" fill="#8dcaf7"/><path d="M9.8 3.2L12.3 0V10.5L9.8 13z" fill="#4a91cd"/><path d="M14 14V1.5" stroke="#333" stroke-width="0.8"/><path d="M12.8 2.5L14 0.3L15.2 2.5z" fill="#333"/></g><g transform="translate(290 998)"><path d="M0.3 3H7Q12.5 3 12.5 9.5V15.5H0.3z" fill="#ececec"/><path d="M12.5 9.5L15.8 7V13L12.5 15.5z" fill="#dedede"/><path d="M7 3L9.5 0.3Q15 1.5 15.8 7.5L12.5 9.5Q12.5 3 7 3z" fill="#b8d8f0"/><path d="M9.8 0.3H3L0.3 3V15.5H12.5L15.8 13V7.5" stroke="#c8c8c8" stroke-width="0.9" fill="none"/></g><g transform="translate(314 998)"><path d="M0.3 3H7Q12.5 3 12.5 9.5V15.5H0.3z" fill="#ececec"/><path d="M12.5 9.5L15.8 7V13L12.5 15.5z" fill="#dedede"/><path d="M7 3L9.5 0.3Q15 1.5 15.8 7.5L12.5 9.5Q12.5 3 7 3z" fill="#b8d8f0"/><path d="M9.8 0.3H3L0.3 3V15.5H12.5L15.8 13V7.5" stroke="#c8c8c8" stroke-width="0.9" fill="none"/></g><g transform="translate(338 998)"><path d="M0.3 3H7Q12.5 3 12.5 9.5V15.5H0.3z" fill="#ececec"/><path d="M12.5 9.5L15.8 7V13L12.5 15.5z" fill="#dedede"/><path d="M7 3L9.5 0.3Q15 1.5 15.8 7.5L12.5 9.5Q12.5 3 7 3z" fill="#b8d8f0"/><path d="M9.8 0.3H3L0.3 3V15.5H12.5L15.8 13V7.5" stroke="#c8c8c8" stroke-width="0.9" fill="none"/></g><g transform="translate(362 998)"><path d="M0.3 3H7Q12.5 3 12.5 9.5V15.5H0.3z" fill="#ececec"/><path d="M12.5 9.5L15.8 7V13L12.5 15.5z" fill="#dedede"/><path d="M7 3L9.5 0.3Q15 1.5 15.8 7.5L12.5 9.5Q12.5 3 7 3z" fill="#b8d8f0"/><path d="M9.8 0.3H3L0.3 3V15.5H12.5L15.8 13V7.5" stroke="#c8c8c8" stroke-width="0.9" fill="none"/></g><g transform="translate(386 998)"><path d="M0.3 3H7Q12.5 3 12.5 9.5V15.5H0.3z" fill="#dcdcdc"/><path d="M12.5 9.5L15.8 7V13L12.5 15.5z" fill="#bcbcbc"/><path d="M7 3L9.5 0.3Q15 1.5 15.8 7.5L12.5 9.5Q12.5 3 7 3z" fill="#5aa9e6"/><path d="M9.8 0.3H3L0.3 3V15.5H12.5L15.8 13V7.5" stroke="#666" stroke-width="0.9" fill="none"/></g><g transform="translate(410 998)"><path d="M0.3 3H7Q12.5 3 12.5 9.5V15.5H0.3z" fill="#dcdcdc"/><path d="M12.5 9.5L15.8 7V13L12.5 15.5z" fill="#bcbcbc"/><path d="M7 3L9.5 0.3Q15 1.5 15.8 7.5L12.5 9.5Q12.5 3 7 3z" fill="#5aa9e6"/><path d="M9.8 0.3H3L0.3 3V15.5H12.5L15.8 13V7.5" stroke="#666" stroke-width="0.9" fill="none"/></g><g transform="translate(434 998)"><path d="M0.3 3H7Q12.5 3 12.5 9.5V15.5H0.3z" fill="#dcdcdc"/><path d="M12.5 9.5L15.8 7V13L12.5 15.5z" fill="#bcbcbc"/><path d="M7 3L9.5 0.3Q15 1.5 15.8 7.5L12.5 9.5Q12.5 3 7 3z" fill="#5aa9e6"/><path d="M9.8 0.3H3L0.3 3V15.5H12.5L15.8 13V7.5" stroke="#666" stroke-width="0.9" fill="none"/></g><g transform="translate(458 998)"><path d="M0.3 3H7Q12.5 3 12.5 9.5V15.5H0.3z" fill="#dcdcdc"/><path d="M12.5 9.5L15.8 7V13L12.5 15.5z" fill="#bcbcbc"/><path d="M7 3L9.5 0.3Q15 1.5 15.8 7.5L12.5 9.5Q12.5 3 7 3z" fill="#5aa9e6"/><path d="M9.8 0.3H3L0.3 3V15.5H12.5L15.8 13V7.5" stroke="#666" stroke-width="0.9" fill="none"/></g><g transform="translate(482 998)"><path d="M0.3 3H7Q12.5 3 12.5 9.5V15.5H0.3z" fill="#dcdcdc"/><path d="M12.5 9.5L15.8 7V13L12.5 15.5z" fill="#bcbcbc"/><path d="M7 3L9.5 0.3Q15 1.5 15.8 7.5L12.5 9.5Q12.5 3 7 3z" fill="#5aa9e6"/><path d="M9.8 0.3H3L0.3 3V15.5H12.5L15.8 13V7.5" stroke="#666" stroke-width="0.9" fill="none"/></g><g transform="translate(506 998)"><path d="M0.3 3H7Q12.5 3 12.5 9.5V15.5H0.3z" fill="#dcdcdc"/><path d="M12.5 9.5L15.8 7V13L12.5 15.5z" fill="#bcbcbc"/><path d="M7 3L9.5 0.3Q15 1.5 15.8 7.5L12.5 9.5Q12.5 3 7 3z" fill="#5aa9e6"/><path d="M9.8 0.3H3L0.3 3V15.5H12.5L15.8 13V7.5" stroke="#666" stroke-width="0.9" fill="none"/></g><g transform="translate(530 998)"><path d="M0.3 3H7Q12.5 3 12.5 9.5V15.5H0.3z" fill="#dcdcdc"/><path d="M12.5 9.5L15.8 7V13L12.5 15.5z" fill="#bcbcbc"/><path d="M7 3L9.5 0.3Q15 1.5 15.8 7.5L12.5 9.5Q12.5 3 7 3z" fill="#5aa9e6"/><path d="M9.8 0.3H3L0.3 3V15.5H12.5L15.8 13V7.5" stroke="#666" stroke-width="0.9" fill="none"/></g><g transform="translate(554 998)"><path d="M0.3 3H7Q12.5 3 12.5 9.5V15.5H0.3z" fill="#dcdcdc"/><path d="M12.5 9.5L15.8 7V13L12.5 15.5z" fill="#bcbcbc"/><path d="M7 3L9.5 0.3Q15 1.5 15.8 7.5L12.5 9.5Q12.5 3 7 3z" fill="#5aa9e6"/><path d="M9.8 0.3H3L0.3 3V15.5H12.5L15.8 13V7.5" stroke="#666" stroke-width="0.9" fill="none"/></g><g transform="translate(578 998)"><path d="M0.3 3H7Q12.5 3 12.5 9.5V15.5H0.3z" fill="#dcdcdc"/><path d="M12.5 9.5L15.8 7V13L12.5 15.5z" fill="#bcbcbc"/><path d="M7 3L9.5 0.3Q15 1.5 15.8 7.5L12.5 9.5Q12.5 3 7 3z" fill="#5aa9e6"/><path d="M9.8 0.3H3L0.3 3V15.5H12.5L15.8 13V7.5" stroke="#666" stroke-width="0.9" fill="none"/></g><path d="M154.5 1022.7H586.5M155 1017V1022M177.9 1017V1022M201.9 1017V1022M225.9 1017V1022M249.9 1017V1022M273.9 1017V1022M297.9 1017V1022M321.9 1017V1022M345.9 1017V1022M369.9 1017V1022M393.9 1017V1022M417.9 1017V1022M441.9 1017V1022M465.9 1017V1022M489.9 1017V1022M513.9 1017V1022M537.9 1017V1022M561.9 1017V1022M585.9 1017V1022" stroke="#c8c8c8" stroke-width="1.5" fill="none"/><path d="M592 992H603.8V995.5L599.6 1000H597.6L592 995.5z" fill="#666"/><rect x="597.6" y="999" width="2" height="25" fill="#666"/></svg>
</body></html>
